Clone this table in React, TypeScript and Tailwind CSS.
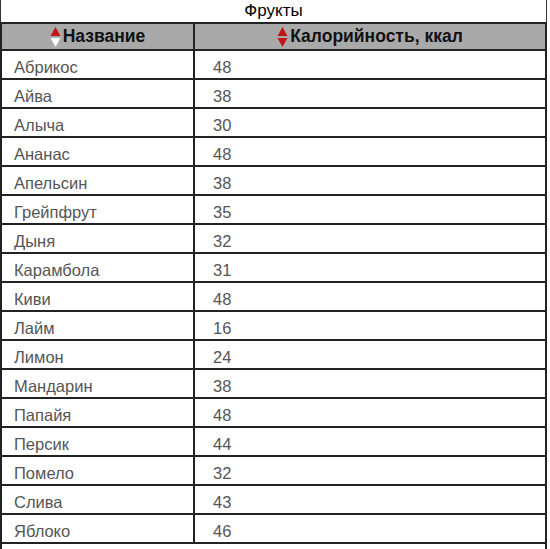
import React from "react";

const rows: [string, number][] = [
  ["Абрикос", 48],
  ["Айва", 38],
  ["Алыча", 30],
  ["Ананас", 48],
  ["Апельсин", 38],
  ["Грейпфрут", 35],
  ["Дыня", 32],
  ["Карамбола", 31],
  ["Киви", 48],
  ["Лайм", 16],
  ["Лимон", 24],
  ["Мандарин", 38],
  ["Папайя", 48],
  ["Персик", 44],
  ["Помело", 32],
  ["Слива", 43],
  ["Яблоко", 46],
];

function SortIcon({ up, down }: { up: string; down: string }) {
  return (
    <svg width="11" height="22" viewBox="0 0 11 22" className="mr-[2px]">
      <polygon points="5.5,1 10.5,10 0.5,10" fill={up} />
      <polygon
        points="0.5,12 10.5,12 5.5,21"
        fill={down}
        stroke={down === "#fff" ? "#ccc" : "none"}
        strokeWidth="0.5"
      />
    </svg>
  );
}

export default function App() {
  return (
    <div
      className="w-[550px] h-[549px] bg-white overflow-hidden"
      style={{ fontFamily: '"Liberation Sans", Arial, sans-serif' }}
    >
      <div className="w-[547px]">
        <div className="h-[22px] border-l border-r border-[#333] flex items-center justify-center text-[17px] text-black leading-none pb-[2px]">
          Фрукты
        </div>
        <div className="border-l-2 border-r-2 border-t-2 border-[#222]">
          <div className="flex h-[27px] bg-[#a9a9a9] border-b-2 border-[#222]">
            <div className="w-[193px] flex items-center justify-center text-[17.5px] font-bold text-[#111] border-r-2 border-[#222]">
              <SortIcon up="#c01818" down="#fff" />
              Название
            </div>
            <div className="flex-1 flex items-center justify-center text-[17.5px] font-bold text-[#111]">
              <SortIcon up="#c01818" down="#c01818" />
              Калорийность, ккал
            </div>
          </div>
          {rows.map(([n, c]) => (
            <div key={n} className="flex h-[29px] border-b-2 border-[#222]">
              <div className="w-[193px] flex items-center pl-[12px] pt-[5px] text-[16.5px] text-[#555] border-r-2 border-[#222]">
                {n}
              </div>
              <div className="flex-1 flex items-center pl-[18px] pt-[5px] text-[16.5px] text-[#555]">
                {c}
              </div>
            </div>
          ))}
          <div className="h-[10px]" />
        </div>
      </div>
    </div>
  );
}
